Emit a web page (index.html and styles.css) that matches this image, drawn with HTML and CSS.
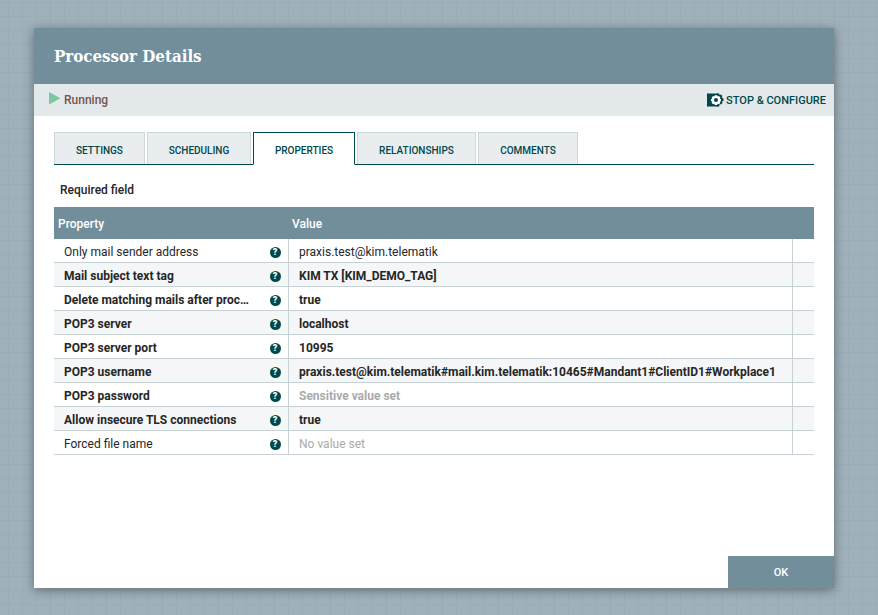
FILE: index.html
```html
<!DOCTYPE html>
<html lang="en">
<head>
  <meta charset="UTF-8" />
  <title>Processor Details</title>
  <link rel="stylesheet" href="styles.css">
</head>
<body>
  <div class="dialog">
    <div class="dialog-header">Processor Details</div>
    <div class="status-bar">
      <div class="status">
        <svg class="run-icon" width="12" height="13" viewBox="0 0 12 13"><path d="M0 0 L11.500 6.200 L0 12.400 Z" fill="#7dc7a0"/></svg>
        <span>Running</span>
      </div>
      <div class="stop-link">
        <svg class="stop-icon" width="17" height="14" viewBox="0 0 17 14">
          <path d="M0 0.500 H11 V13.500 H0 Z" fill="#004849"/>
          <path fill-rule="evenodd" fill="#004849" d="M9.800 0.500 H12.200 L12.600 2 L14 1.500 L15.400 2.900 L14.700 4.200 L16.500 5.700 V8.100 L14.900 8.600 L15.500 10.100 L14.100 11.500 L12.700 10.900 L12.200 13.500 H9.800 V11 A4.100 4.100 0 0 0 9.800 3 Z"/>
          <path fill-rule="evenodd" fill="#fff" d="M7.800 2.200 H10.200 L10.600 3.500 L11.900 3 L13.400 4.500 L12.700 5.700 L14 6.100 V8.200 L12.700 8.600 L13.400 9.900 L11.900 11.300 L10.600 10.700 L10.200 12 H7.800 L7.400 10.700 L6.100 11.300 L4.600 9.900 L5.300 8.600 L4 8.200 V6.100 L5.300 5.700 L4.600 4.500 L6.100 3 L7.400 3.500 Z M9 5.100 A2 2 0 1 0 9 9.100 A2 2 0 1 0 9 5.100 Z"/>
        </svg>
        <span>STOP &amp; CONFIGURE</span>
      </div>
    </div>
    <div class="dialog-body">
      <div class="tabs">
        <div class="tab tab-settings">SETTINGS</div>
        <div class="tab tab-scheduling">SCHEDULING</div>
        <div class="tab tab-properties active">PROPERTIES</div>
        <div class="tab tab-relationships">RELATIONSHIPS</div>
        <div class="tab tab-comments">COMMENTS</div>
      </div>
      <div class="required">Required field</div>
      <table class="props">
        <colgroup>
          <col class="c-name"><col class="c-value"><col class="c-action">
        </colgroup>
        <thead>
          <tr><th>Property</th><th colspan="2">Value</th></tr>
        </thead>
        <tbody>
          <tr>
            <td><div class="name"><span class="label">Only mail sender address</span><span class="help">?</span></div></td>
            <td class="col-value">praxis.test@kim.telematik</td><td class="col-action"></td>
          </tr>
          <tr class="odd req">
            <td><div class="name"><span class="label">Mail subject text tag</span><span class="help">?</span></div></td>
            <td class="col-value">KIM TX [KIM_DEMO_TAG]</td><td class="col-action"></td>
          </tr>
          <tr class="req">
            <td><div class="name"><span class="label">Delete matching mails after proc…</span><span class="help">?</span></div></td>
            <td class="col-value">true</td><td class="col-action"></td>
          </tr>
          <tr class="odd req">
            <td><div class="name"><span class="label">POP3 server</span><span class="help">?</span></div></td>
            <td class="col-value">localhost</td><td class="col-action"></td>
          </tr>
          <tr class="req">
            <td><div class="name"><span class="label">POP3 server port</span><span class="help">?</span></div></td>
            <td class="col-value">10995</td><td class="col-action"></td>
          </tr>
          <tr class="odd req">
            <td><div class="name"><span class="label">POP3 username</span><span class="help">?</span></div></td>
            <td class="col-value">praxis.test@kim.telematik#mail.kim.telematik:10465#Mandant1#ClientID1#Workplace1</td><td class="col-action"></td>
          </tr>
          <tr class="req">
            <td><div class="name"><span class="label">POP3 password</span><span class="help">?</span></div></td>
            <td class="col-value muted">Sensitive value set</td><td class="col-action"></td>
          </tr>
          <tr class="odd req">
            <td><div class="name"><span class="label">Allow insecure TLS connections</span><span class="help">?</span></div></td>
            <td class="col-value">true</td><td class="col-action"></td>
          </tr>
          <tr>
            <td><div class="name"><span class="label">Forced file name</span><span class="help">?</span></div></td>
            <td class="col-value muted">No value set</td><td class="col-action"></td>
          </tr>
        </tbody>
      </table>
    </div>
    <div class="dialog-footer">
      <button class="ok">OK</button>
    </div>
  </div>
</body>
</html>
```

FILE: styles.css
```css
html, body {
  height: 100%;
}

body {
  margin: 0;
  padding: 28px 44px 0 34px;
  box-sizing: border-box;
  overflow: hidden;
  font-family: Roboto, sans-serif;
  background-color: #a0b1bb;
  background-image:
    linear-gradient(to right, #9aacb6 1px, transparent 1px),
    linear-gradient(to bottom, #9aacb6 1px, transparent 1px);
  background-size: 14px 14px;
  background-position: 8px 2px;
}

.dialog {
  width: 800px;
  height: 560px;
  background: white;
  display: flex;
  flex-direction: column;
  box-shadow: 0 2px 10px rgba(0, 0, 0, 0.4);
}

.dialog-header {
  height: 56px;
  line-height: 57px;
  padding-left: 20px;
  background: #728e9b;
  color: white;
  font-family: "DejaVu Serif Condensed", "DejaVu Serif", serif;
  font-size: 16.750px;
  font-weight: bold;
}

.status-bar {
  height: 32px;
  background: #e3e8eb;
  display: flex;
  justify-content: space-between;
  align-items: center;
  padding: 0 8px 0 15px;
}

.status {
  display: flex;
  align-items: center;
  font-size: 12px;
  font-weight: 500;
  color: #775351;
}

.run-icon {
  margin: 0 3px 4px 0;
}

.stop-link {
  display: flex;
  align-items: center;
  font-size: 11px;
  font-weight: 500;
  color: #004849;
}

.stop-icon {
  margin-right: 2px;
}

.dialog-body {
  flex: 1;
  padding: 16px 20px 0;
}

.tabs {
  display: flex;
  gap: 2px;
  height: 33px;
  box-sizing: border-box;
  border-bottom: 1px solid #004849;
}

.tab {
  height: 32px;
  box-sizing: border-box;
  border: 1px solid #cbd9db;
  border-bottom: none;
  background: #e9edf0;
  color: #004849;
  font-size: 10px;
  font-weight: 500;
  line-height: 35px;
  text-align: center;
}

.tab-settings { width: 91px; }
.tab-scheduling { width: 104px; }
.tab-properties { width: 102px; }
.tab-relationships { width: 119px; }
.tab-comments { width: 100px; }

.tab.active {
  height: 33px;
  background: white;
  border: 1px solid #004849;
  border-bottom: 1px solid white;
}

.required {
  margin: 18px 0 0 6px;
  height: 24px;
  font-size: 12px;
  font-weight: 500;
  color: #262626;
  line-height: 15px;
}

.props {
  width: 760px;
  border-collapse: separate;
  border-spacing: 0;
  table-layout: fixed;
  font-size: 12px;
  color: #262626;
}

.c-name { width: 234px; }
.c-action { width: 22px; }

.props th {
  height: 32px;
  box-sizing: border-box;
  padding: 1px 0 0 4px;
  background: #728e9b;
  color: white;
  font-weight: 500;
  text-align: left;
}

.props td {
  height: 24px;
  padding: 3px 0 0;
  box-sizing: border-box;
  border-bottom: 1px solid #c7d2d7;
}

.props tr.odd td {
  background: #f4f6f7;
}

.props tr.req td {
  font-weight: 700;
}

.name {
  display: flex;
  justify-content: space-between;
  align-items: center;
  padding: 0 8px 0 10px;
}

.label {
  white-space: nowrap;
}

.help {
  width: 11px;
  height: 11px;
  margin-right: -0.500px;
  border-radius: 50%;
  background: #004849;
  color: white;
  font-size: 9px;
  font-weight: 900;
  line-height: 11px;
  text-align: center;
}

.props td.col-value {
  padding-left: 10px;
  border-left: 1px solid #c7d2d7;
  white-space: nowrap;
}

.col-action {
  border-left: 1px solid #c7d2d7;
}

.props td.muted {
  color: #aaaaaa;
}

.dialog-footer {
  display: flex;
  justify-content: flex-end;
}

.ok {
  width: 106px;
  height: 32px;
  border: none;
  background: #728e9b;
  color: white;
  font-family: Roboto, sans-serif;
  font-size: 11px;
  font-weight: 500;
}
```
